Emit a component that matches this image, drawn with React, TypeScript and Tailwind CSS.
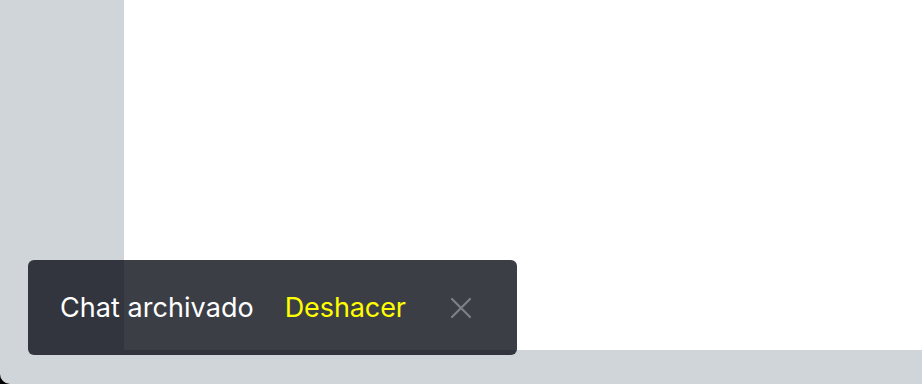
import React from 'react'

export default function App() {
  return (
    <div className="w-[922px] h-[384px] bg-black overflow-hidden">
      <div
        className="relative w-full h-full bg-[#d0d5d9] rounded-bl-[10px] overflow-hidden"
        style={{ fontFamily: 'Inter, "Noto Sans", sans-serif' }}
      >
        {/* Main area */}
        <div className="flex h-[350px]">
          <div className="w-[124px] shrink-0" />
          <div className="flex-1 bg-white" />
        </div>

        {/* Snackbar */}
        <div className="absolute left-[28px] top-[260px] h-[95px] w-[489px] rounded-[6px] bg-[rgba(5,8,18,0.78)] flex items-center pl-[32px] pr-[45px]">
          <span className="text-white text-[27px] leading-none tracking-[0.05px]">
            Chat archivado
          </span>
          <button className="ml-[31px] text-[#ffff00] text-[27px] leading-none tracking-[-0.1px]">
            Deshacer
          </button>
          <button className="ml-auto text-[#7d8187]">
            <svg width="22" height="22" viewBox="0 0 22 22" fill="none" stroke="currentColor" strokeWidth="2.2" strokeLinecap="round">
              <path d="M2 2L20 20M20 2L2 20" />
            </svg>
          </button>
        </div>
      </div>
    </div>
  )
}
